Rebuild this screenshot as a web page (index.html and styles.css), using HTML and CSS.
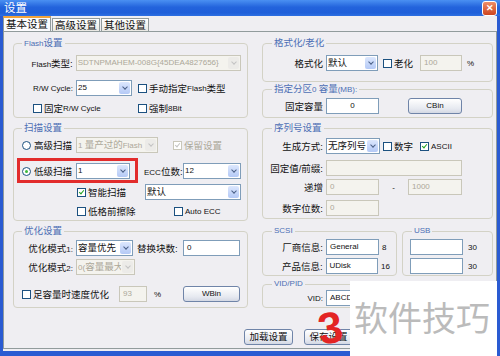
FILE: index.html
```html
<!DOCTYPE html>
<html lang="zh">
<head>
  <meta charset="UTF-8" />
  <title>设置</title>
  <link rel="stylesheet" href="styles.css">
</head>
<body>
<div class="window">
  <!-- title bar -->
  <div class="titlebar">
    <span>设置</span>
    <span class="close">✕</span>
  </div>

  <div class="client">
    <div class="tabs">
      <div class="tab on">基本设置</div>
      <div class="tab">高级设置</div>
      <div class="tab">其他设置</div>
    </div>

    <div class="panel">
      <div class="cols">
        <!-- left column -->
        <div class="col">
          <fieldset class="grp">
            <legend><span class="en">Flash</span>设置</legend>
            <div class="row mt3">
              <span class="lbl"><span class="en">Flash</span>类型:</span>
              <div class="combo dis w166"><span class="val en">SDTNPMAHEM-008G{45DEA4827656}</span><span class="arrow"></span></div>
            </div>
            <div class="row mt5">
              <span class="lbl en">R/W Cycle:</span>
              <div class="combo w56"><span class="val en">25</span><span class="arrow"></span></div>
              <label class="chk ml6"><span class="cb"></span>手动指定<span class="en">Flash</span>类型</label>
            </div>
            <div class="row h18 mt1">
              <label class="chk ml13 w105"><span class="cb"></span>固定<span class="en">R/W Cycle</span></label>
              <label class="chk"><span class="cb"></span>强制<span class="en">8Bit</span></label>
            </div>
          </fieldset>

          <fieldset class="grp mt4">
            <legend>扫描设置</legend>
            <div class="row mt1">
              <label class="radio w56"><span class="rb"></span>高级扫描</label>
              <div class="combo dis w82"><span class="val"><span class="en">1 </span>量产过的<span class="en">Flash</span></span><span class="arrow"></span></div>
              <label class="chk dis ml15"><span class="cb on"></span>保留设置</label>
            </div>
            <div class="row mt6 marked">
              <label class="radio w56"><span class="rb on"></span>低级扫描</label>
              <div class="combo w54"><span class="val en">1</span><span class="arrow"></span></div>
              <span class="ml14 w39"><span class="en">ECC</span>位数:</span>
              <div class="combo w58"><span class="val en">12</span><span class="arrow"></span></div>
              <div class="mark"></div>
            </div>
            <div class="row mt1">
              <label class="chk ml57 w68"><span class="cb on"></span>智能扫描</label>
              <div class="combo w96"><span class="val">默认</span><span class="arrow"></span></div>
            </div>
            <div class="row h18">
              <label class="chk ml57 w97"><span class="cb"></span>低格前擦除</label>
              <label class="chk en"><span class="cb"></span>Auto ECC</label>
            </div>
          </fieldset>

          <fieldset class="grp mt4 pb3">
            <legend>优化设置</legend>
            <div class="row mt1">
              <span class="lbl">优化模式<span class="en">1:</span></span>
              <div class="combo w57"><span class="val">容量优先</span><span class="arrow"></span></div>
              <span class="ml4 w46">替换块数:</span>
              <div class="input en w57">0</div>
            </div>
            <div class="row h18">
              <span class="lbl">优化模式<span class="en">2:</span></span>
              <div class="combo dis w59"><span class="val"><span class="en">0(</span>容量最大</span><span class="arrow"></span></div>
            </div>
            <div class="row mt8">
              <label class="chk ml2 w97"><span class="cb"></span>足容量时速度优化</label>
              <div class="input dis en w28">93</div>
              <span class="ml7 w8 en">%</span>
              <div class="btn ml21 w57 en">WBin</div>
            </div>
          </fieldset>
        </div>

        <!-- right column -->
        <div class="col right">
          <fieldset class="grp pb8">
            <legend>格式化/老化</legend>
            <div class="row mt4">
              <span class="lbl">格式化</span>
              <div class="combo w52"><span class="val">默认</span><span class="arrow"></span></div>
              <label class="chk ml5 w37"><span class="cb"></span>老化</label>
              <div class="input dis en w42">100</div>
              <span class="ml5 en">%</span>
            </div>
          </fieldset>

          <fieldset class="grp mt1 pb1">
            <legend>指定分区<span class="en">0 </span>容量<span class="en">(MB):</span></legend>
            <div class="row">
              <span class="lbl">固定容量</span>
              <div class="input en w53 center">0</div>
              <div class="btn en ml29 w54">CBin</div>
            </div>
          </fieldset>

          <fieldset class="grp mt4 pb1">
            <legend>序列号设置</legend>
            <div class="row h18 mt3">
              <span class="lbl">生成方式:</span>
              <div class="combo w54"><span class="val">无序列号</span><span class="arrow"></span></div>
              <label class="chk ml3 w37"><span class="cb"></span>数字</label>
              <label class="chk en"><span class="cb on"></span>ASCII</label>
            </div>
            <div class="row h18 mt4">
              <span class="lbl">固定值/前缀:</span>
              <div class="input dis w136"></div>
            </div>
            <div class="row h18 mt1">
              <span class="lbl">递增</span>
              <div class="input dis en w53">0</div>
              <span class="w29 center en">-</span>
              <div class="input dis en w54">1000</div>
            </div>
            <div class="row h18 mt3">
              <span class="lbl">数字位数:</span>
              <div class="input dis en w53">0</div>
            </div>
          </fieldset>

          <div class="pair">
            <fieldset class="grp scsi">
              <legend class="en">SCSI</legend>
              <div class="row h18 mt1">
                <span class="lbl">厂商信息:</span>
                <div class="input en w53">General</div>
                <span class="ml3 en">8</span>
              </div>
              <div class="row h18 mt1">
                <span class="lbl">产品信息:</span>
                <div class="input en w53">UDisk</div>
                <span class="ml3 en">16</span>
              </div>
            </fieldset>
            <fieldset class="grp usb">
              <legend class="en">USB</legend>
              <div class="row h18 mt1">
                <div class="input w53"></div>
                <span class="ml5 en">30</span>
              </div>
              <div class="row h18 mt1">
                <div class="input w53"></div>
                <span class="ml5 en">30</span>
              </div>
            </fieldset>
          </div>

          <fieldset class="grp mt2 pb1">
            <legend class="en">VID/PID</legend>
            <div class="row h16">
              <span class="lbl en">VID:</span>
              <div class="input en w60">ABCD</div>
            </div>
          </fieldset>
        </div>
      </div>

      <div class="footer">
        <div class="btn w49">加载设置</div>
        <div class="btn w49">保存设置</div>
      </div>
    </div>
  </div>

  <!-- watermark and hand-drawn step number on top of the shot -->
  <div class="watermark">软件技巧</div>
  <div class="step">3</div>
</div>
</body>
</html>
```

FILE: styles.css
```css
body {
  margin: 0;
  font-family: "Liberation Sans", "Noto Sans CJK SC", sans-serif;
  font-size: 9.5px;
  color: #111;
}

/* latin runs are drawn smaller than the chinese ones, as in the shot */
.en {
  font-size: 8px;
}

.window {
  position: relative;
  width: 500px;
  height: 356px;
  background: #2a5bd2;
  display: flex;
  flex-direction: column;
  overflow: hidden;
}

.titlebar {
  height: 16px;
  background: linear-gradient(#4a90f2, #2363dc 45%, #1f5fd9 80%, #2d6fe2);
  color: #fff;
  font-size: 11.5px;
  line-height: 16px;
  padding-left: 4px;
  display: flex;
  justify-content: space-between;
}

.close {
  width: 13px;
  height: 13px;
  margin: 1px 3px 0 0;
  border: 1px solid #fff;
  border-radius: 3px;
  background: linear-gradient(#ee8e68, #cc4420);
  font-size: 9px;
  line-height: 13px;
  text-align: center;
  font-weight: bold;
}

.client {
  flex: 1;
  margin: 0 3px 5px;
  background: #efeef2;
  display: flex;
  flex-direction: column;
}

.tabs {
  display: flex;
  align-items: flex-end;
  height: 15px;
}

.tab {
  height: 13px;
  line-height: 12px;
  padding: 0 2px;
  border: 1px solid #919b9c;
  border-bottom: none;
  background: linear-gradient(#fff, #e9e8e3);
  font-size: 10.5px;
  box-sizing: border-box;
  margin-right: 1px;
}

.tab.on {
  height: 15px;
  border-top: 2px solid #f2a33a;
  background: #fbfbfd;
}

.panel {
  flex: 1;
  margin-bottom: 2px;
  border: 1px solid #919b9c;
  padding: 5px 0 0 9px;
}

.cols {
  display: grid;
  grid-template-columns: 235px 231px;
  column-gap: 14px;
}

.col {
  display: flex;
  flex-direction: column;
}

.grp {
  margin: 0;
  padding: 0 6px;
  border: 1px solid #d3d2c6;
  border-radius: 4px;
  min-width: 0;
}

.right .grp {
  padding-left: 7px;
}

.grp legend {
  padding: 0 2px;
  margin-left: 2px;
  line-height: 12px;
  color: #4d6fb5;
}

.pair {
  display: flex;
  gap: 5px;
  margin-top: 6px;
}

.scsi { width: 135px; box-sizing: border-box; }
.usb { flex: 1; }

.row {
  display: flex;
  align-items: center;
  height: 20px;
  white-space: nowrap;
}

.marked { position: relative; }

.mark {
  position: absolute;
  left: -3px;
  top: -3px;
  width: 121px;
  height: 25px;
  border: 3px solid #e22c2c;
  box-sizing: border-box;
}

.lbl {
  width: 53px;
  margin-right: 3px;
  text-align: right;
}

.combo {
  display: flex;
  height: 16px;
  border: 1px solid #7f9db9;
  background: #fff;
  box-sizing: border-box;
}

.combo .val {
  flex: 1;
  padding-left: 1px;
  line-height: 14px;
  overflow: hidden;
}

.combo .arrow {
  width: 11px;
  margin: 1px;
  border-radius: 2px;
  background: linear-gradient(#dce7fd, #b4c9f6);
  display: flex;
  align-items: center;
  justify-content: center;
}

.combo .arrow::after {
  content: "";
  width: 3px;
  height: 3px;
  margin-top: -3px;
  border-right: 1.5px solid #4a5f86;
  border-bottom: 1.5px solid #4a5f86;
  transform: rotate(45deg);
}

.combo.dis {
  border-color: #c9c7ba;
  background: #f4f3ee;
  color: #aca899;
}

.combo.dis .arrow {
  background: #ecebe8;
}

.combo.dis .arrow::after {
  border-color: #c3c3c3;
}

.input {
  height: 16px;
  border: 1px solid #7f9db9;
  background: #fff;
  box-sizing: border-box;
  padding-left: 3px;
  line-height: 14px;
}

.input.dis {
  border-color: #c9c7ba;
  background: #f4f3ee;
  color: #aca899;
}

.chk, .radio {
  display: flex;
  align-items: center;
}

.cb {
  width: 9px;
  height: 9px;
  border: 1px solid #1c5180;
  background: #fff;
  box-sizing: border-box;
  margin-right: 2px;
  display: flex;
  align-items: center;
  justify-content: center;
}

.cb.on::after {
  content: "";
  width: 2px;
  height: 4px;
  margin-top: -2px;
  border-right: 1.5px solid #21a121;
  border-bottom: 1.5px solid #21a121;
  transform: rotate(40deg);
}

.chk.dis { color: #aca899; }
.chk.dis .cb { border-color: #c9c7ba; }
.chk.dis .cb.on::after { border-color: #c3c3c3; }

.rb {
  width: 9px;
  height: 9px;
  border: 1px solid #1c5180;
  border-radius: 50%;
  background: #fff;
  box-sizing: border-box;
  margin: 0 3px 0 2px;
  display: flex;
  align-items: center;
  justify-content: center;
}

.rb.on::after {
  content: "";
  width: 3px;
  height: 3px;
  border-radius: 50%;
  background: #3cb83c;
}

.btn {
  height: 16px;
  border: 1px solid #6f84a8;
  border-radius: 3px;
  background: linear-gradient(#ffffff, #e6e9f0 70%, #d3d8e4);
  box-sizing: border-box;
  text-align: center;
  line-height: 14px;
}

.footer {
  display: flex;
  gap: 11px;
  margin-top: 21px;
  padding-left: 231px;
}

.center { text-align: center; padding-left: 0; }

.watermark {
  position: absolute;
  left: 350px;
  top: 281px;
  width: 147px;
  height: 75px;
  background: #fff;
  color: #bbbbbb;
  font-family: "Noto Sans CJK SC", sans-serif;
  font-size: 34px;
  line-height: 34px;
  padding: 19px 0 0 4px;
  box-sizing: border-box;
  white-space: nowrap;
}

.step {
  position: absolute;
  left: 318px;
  top: 306px;
  color: #e32424;
  font-family: "Liberation Sans", sans-serif;
  font-weight: bold;
  font-size: 44px;
  line-height: 44px;
  transform: rotate(-8deg);
}

.h16 { height: 16px; }
.h18 { height: 18px; }
.mt1 { margin-top: 1px; }
.mt2 { margin-top: 2px; }
.mt3 { margin-top: 3px; }
.mt4 { margin-top: 4px; }
.mt5 { margin-top: 5px; }
.mt6 { margin-top: 6px; }
.mt8 { margin-top: 8px; }
.pb1 { padding-bottom: 1px; }
.pb3 { padding-bottom: 3px; }
.pb8 { padding-bottom: 8px; }
.ml2 { margin-left: 2px; }
.ml3 { margin-left: 3px; }
.ml4 { margin-left: 4px; }
.ml5 { margin-left: 5px; }
.ml6 { margin-left: 6px; }
.ml7 { margin-left: 7px; }
.ml13 { margin-left: 13px; }
.ml14 { margin-left: 14px; }
.ml15 { margin-left: 15px; }
.ml21 { margin-left: 21px; }
.ml29 { margin-left: 29px; }
.ml57 { margin-left: 57px; }
.w8 { width: 8px; }
.w28 { width: 28px; }
.w29 { width: 29px; }
.w37 { width: 37px; }
.w39 { width: 39px; }
.w42 { width: 42px; }
.w46 { width: 46px; }
.w49 { width: 49px; }
.w52 { width: 52px; }
.w53 { width: 53px; }
.w54 { width: 54px; }
.w56 { width: 56px; }
.w57 { width: 57px; }
.w58 { width: 58px; }
.w59 { width: 59px; }
.w60 { width: 60px; }
.w68 { width: 68px; }
.w82 { width: 82px; }
.w96 { width: 96px; }
.w97 { width: 97px; }
.w105 { width: 105px; }
.w136 { width: 136px; }
.w166 { width: 166px; }
```
